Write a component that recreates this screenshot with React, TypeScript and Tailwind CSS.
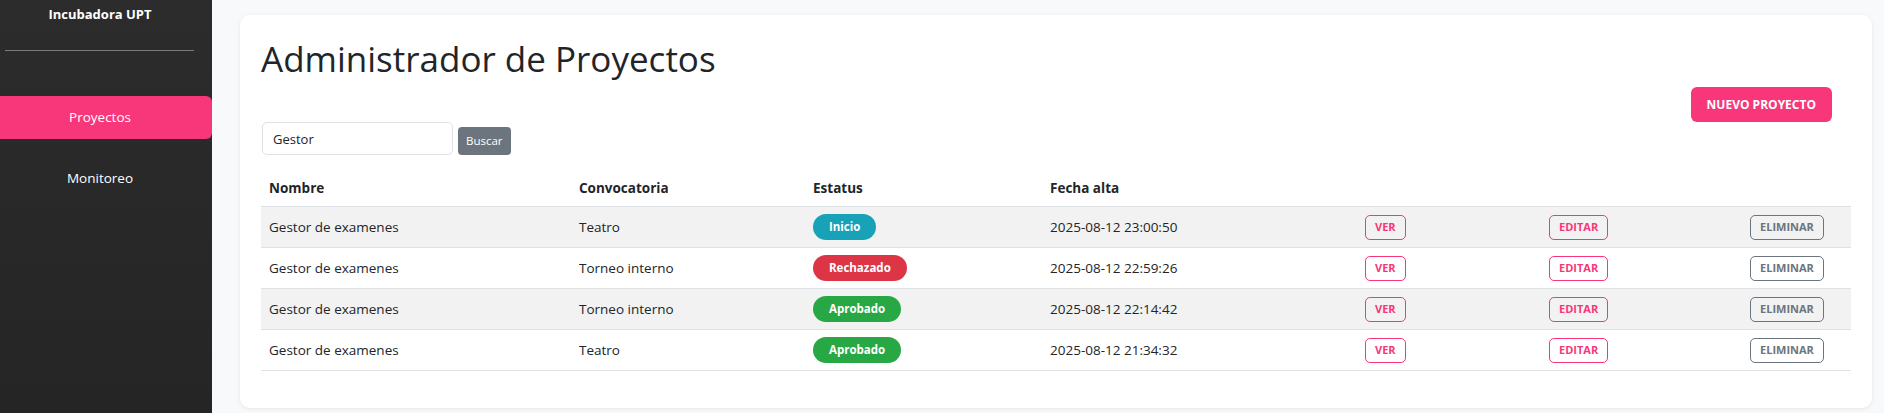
import React from "react";

type Row = {
  nombre: string;
  convocatoria: string;
  estatus: "Inicio" | "Rechazado" | "Aprobado";
  fecha: string;
};

const rows: Row[] = [
  { nombre: "Gestor de examenes", convocatoria: "Teatro", estatus: "Inicio", fecha: "2025-08-12 23:00:50" },
  { nombre: "Gestor de examenes", convocatoria: "Torneo interno", estatus: "Rechazado", fecha: "2025-08-12 22:59:26" },
  { nombre: "Gestor de examenes", convocatoria: "Torneo interno", estatus: "Aprobado", fecha: "2025-08-12 22:14:42" },
  { nombre: "Gestor de examenes", convocatoria: "Teatro", estatus: "Aprobado", fecha: "2025-08-12 21:34:32" },
];

const badgeColor = {
  Inicio: "bg-[#17a2b8]",
  Rechazado: "bg-[#dc3545]",
  Aprobado: "bg-[#28a745]",
};

const cols = "grid grid-cols-[310px_234px_237px_315px_184px_201px_1fr] items-center";

function Sidebar() {
  return (
    <aside className="w-[212px] shrink-0 bg-gradient-to-b from-[#2c2c2c] to-[#252525] text-white">
      <div className="flex h-[30px] items-center justify-center pr-[12px] text-[13px] font-bold">
        Incubadora UPT
      </div>
      <div className="ml-[5px] mt-[20px] h-px w-[189px] bg-[#7a7a7a]" />
      <nav className="mt-[45px] flex flex-col gap-[18px] text-[13.5px]">
        <a className="flex h-[43px] items-center justify-center rounded-r-[6px] bg-[#f7377a] pr-[12px]">
          Proyectos
        </a>
        <a className="flex h-[43px] items-center justify-center pr-[12px]">Monitoreo</a>
      </nav>
    </aside>
  );
}

function ActionButton({ label, gray }: { label: string; gray?: boolean }) {
  return (
    <button
      className={
        gray
          ? "h-[25px] rounded-[5px] border border-[#6c757d] px-[9px] text-[11px] font-bold text-[#6c757d]"
          : "h-[25px] rounded-[5px] border border-[#f7377a] px-[9px] text-[11px] font-bold text-[#f7377a]"
      }
    >
      {label}
    </button>
  );
}

export default function App() {
  return (
    <div
      className="flex h-[413px] w-full bg-[#f8f9fa] text-[#212529]"
      style={{ fontFamily: '"Open Sans", "Noto Sans", sans-serif' }}
    >
      <Sidebar />
      <main className="flex-1 pl-[28px] pr-[12px] pt-[15px]">
        <div className="h-[393px] rounded-[10px] bg-white px-[21px] pt-[23px] shadow-[0_1px_4px_rgba(0,0,0,0.08)]">
          <h1 className="text-[35px] leading-[42px] font-normal">Administrador de Proyectos</h1>

          <div className="mt-[7px] flex justify-end pr-[19px]">
            <button className="h-[35px] rounded-[6px] bg-[#f7377a] px-[16px] text-[12px] font-bold text-white">
              NUEVO PROYECTO
            </button>
          </div>

          <div className="flex items-end gap-[5px] pl-px">
            <input
              defaultValue="Gestor"
              className="h-[33px] w-[191px] rounded-[5px] border border-[#dee2e6] px-[10px] text-[13px] text-[#212529] outline-none"
            />
            <button className="h-[28px] rounded-[4px] bg-[#6c757d] px-[8px] text-[11.5px] text-white">
              Buscar
            </button>
          </div>

          <div className="mt-[16px] text-[13.5px]">
            <div className={`${cols} h-[36px] border-b border-[#dee2e6] font-bold`}>
              <div className="px-2">Nombre</div>
              <div className="px-2">Convocatoria</div>
              <div className="px-2">Estatus</div>
              <div className="px-2">Fecha alta</div>
              <div />
              <div />
              <div />
            </div>
            {rows.map((r, i) => (
              <div
                key={i}
                className={`${cols} h-[41px] border-b border-[#dee2e6] ${i % 2 === 0 ? "bg-[#f2f2f2]" : "bg-white"}`}
              >
                <div className="px-2">{r.nombre}</div>
                <div className="px-2">{r.convocatoria}</div>
                <div className="px-2">
                  <span
                    className={`inline-flex h-[26px] items-center rounded-full px-[16px] text-[11.5px] font-bold text-white ${badgeColor[r.estatus]}`}
                  >
                    {r.estatus}
                  </span>
                </div>
                <div className="px-2">{r.fecha}</div>
                <div className="px-2">
                  <ActionButton label="VER" />
                </div>
                <div className="px-2">
                  <ActionButton label="EDITAR" />
                </div>
                <div className="px-2">
                  <ActionButton label="ELIMINAR" gray />
                </div>
              </div>
            ))}
          </div>
        </div>
      </main>
    </div>
  );
}
